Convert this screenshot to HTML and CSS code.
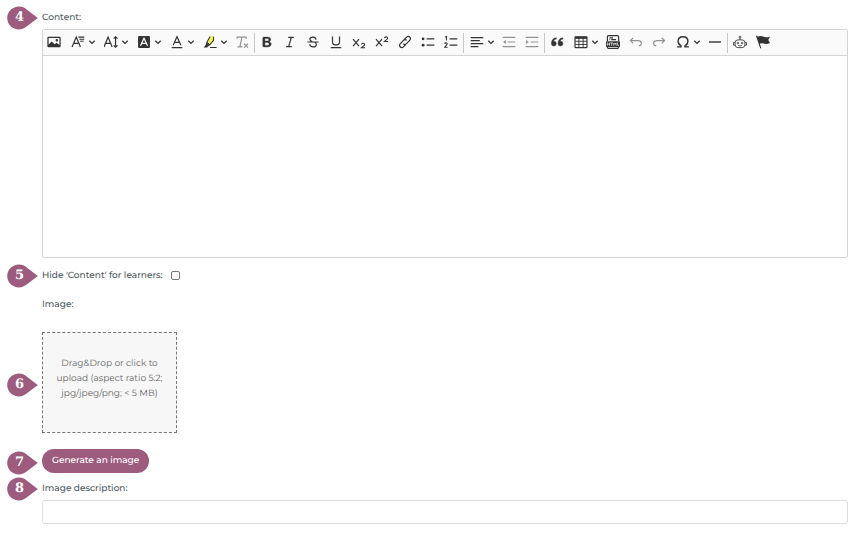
FILE: index.html
```html
<!DOCTYPE html>
<html lang="en">
<head>
<meta charset="utf-8">
<meta name="viewport" content="width=device-width, initial-scale=1">
<title>Content form</title>
<link rel="stylesheet" href="styles.css">
</head>
<body>
<svg class="defs" aria-hidden="true">
  <symbol id="pin" viewBox="0 0 31 24"><path d="M12 .5C5.500 .5.200 5.600.200 12S5.500 23.500 12 23.500c3 0 5.600-1.200 8-3.200L30.800 12 20 3.700C17.600 1.700 15 .5 12 .5z"/></symbol>
  <symbol id="chev" viewBox="0 0 8 8"><path d="M1.300 2.800 4 5.400 6.700 2.800" fill="none" stroke="currentColor" stroke-width="1.300"/></symbol>
</svg>
<form class="form">
  <div class="row label-row">
    <span class="marker"><svg><use href="#pin"/></svg><b>4</b></span>
    <label for="content">Content:</label>
  </div>
  <div class="editor">
    <div class="toolbar" role="toolbar" aria-label="Editor toolbar">
      <button type="button" aria-label="Insert image"><svg class="icon" viewBox="0 0 20 20"><path fill-rule="evenodd" d="M2 2.500h16A1.500 1.500 0 0 1 19.500 4v12a1.500 1.500 0 0 1-1.500 1.500H2A1.500 1.500 0 0 1 .5 16V4A1.500 1.500 0 0 1 2 2.500zM2.300 4.300v9.200l4.500-4.200 4.200 4 2.600-2.300 4.100 3.400V4.300zM14 5.700a1.800 1.800 0 1 1 0 3.600 1.800 1.800 0 0 1 0-3.600z"/></svg></button>
      <button type="button" class="drop" aria-label="Font family"><svg class="icon line" viewBox="0 0 20 20"><path d="M1.500 17 7.500 3 13.500 17M3.700 12h7.600"/><path d="M10.500 3H19M12 6h7M13 9h5" stroke-width="1.500"/></svg><svg class="chev"><use href="#chev"/></svg></button>
      <button type="button" class="drop" aria-label="Font size"><svg class="icon line" viewBox="0 0 20 20"><path d="M0 17 5.800 3 11.600 17M2.200 12h7.200M16.500 3v14M13.800 5.200l2.700-2.700 2.700 2.700M13.800 14.800l2.700 2.700 2.700-2.700"/></svg><svg class="chev"><use href="#chev"/></svg></button>
      <button type="button" class="drop" aria-label="Font background color"><svg class="icon" viewBox="0 0 20 20"><rect x="1.500" y="1.500" width="17" height="17" rx="1.500"/><path d="M5 15.500 10 4.500 15 15.500M6.800 12h6.400" fill="none" stroke="#fff" stroke-width="1.700"/></svg><svg class="chev"><use href="#chev"/></svg></button>
      <button type="button" class="drop" aria-label="Font color"><svg class="icon line" viewBox="0 0 20 20"><path d="M4.500 14.500 10 2.500 15.500 14.500M6.500 10.500h7M2.500 18h15"/></svg><svg class="chev"><use href="#chev"/></svg></button>
      <button type="button" class="drop" aria-label="Highlight"><svg class="icon" viewBox="0 0 20 20"><path d="m10 2 6-.5-2.500 9-4 3.500-4-3z" fill="#f7f04a"/><path d="M10.200 2 5.500 10.500l4.300 3.500 5.200-6.500V2.500" fill="none" stroke="currentColor" stroke-width="1.500"/><path d="m5 10.500 5 4-2.500 1.500L5.800 18H1l3-4zM10 17h9.500v1.700H10z"/></svg><svg class="chev"><use href="#chev"/></svg></button>
      <button type="button" class="muted" aria-label="Remove format"><svg class="icon line" viewBox="0 0 20 20"><path d="M3 5.500V3h13v2.500M10 3 7 16.500M3.500 17h7M13 12.500l5.500 5.500M18.500 12.500 13 18"/></svg></button>
      <span class="sep"></span>
      <button type="button" aria-label="Bold"><svg class="icon" viewBox="0 0 20 20"><path d="M10.187 17H5.773c-.637 0-1.092-.138-1.364-.415-.273-.277-.409-.718-.409-1.323V4.738c0-.617.14-1.062.419-1.332.279-.27.73-.406 1.354-.406h4.680c.69 0 1.288.041 1.793.124.506.083.96.242 1.360.477.341.197.644.447.906.75a3.262 3.262 0 0 1 .808 2.162c0 1.401-.722 2.426-2.167 3.075C15.050 10.175 16 11.315 16 13.010a3.756 3.756 0 0 1-2.296 3.504 6.100 6.100 0 0 1-1.517.377c-.571.073-1.238.11-2 .11zm-.217-6.217H7v4.087h3.069c1.977 0 2.965-.69 2.965-2.072 0-.707-.256-1.220-.768-1.537-.512-.319-1.277-.478-2.296-.478zM7 5.130v3.619h2.606c.729 0 1.292-.067 1.690-.2a1.600 1.600 0 0 0 .91-.765c.165-.267.247-.566.247-.897 0-.707-.26-1.176-.778-1.409-.519-.232-1.310-.348-2.375-.348H7z" stroke="currentColor" stroke-width=".6"/></svg></button>
      <button type="button" aria-label="Italic"><svg class="icon line" viewBox="0 0 20 20"><path d="M7.500 3.300h8M4.500 16.700h8M11.800 3.300 8.200 16.700"/></svg></button>
      <button type="button" aria-label="Strikethrough"><svg class="icon line" viewBox="0 0 20 20"><path d="M14.500 6.500C14 4.200 12.500 3 10 3 7.500 3 5.500 4.200 5.500 6.200c0 1.700 1.400 2.700 3.500 3.300M2 10h16M12.500 10.700c1.500.6 2.300 1.500 2.300 2.700 0 2.200-2 3.600-4.600 3.600-2.700 0-4.500-1.400-4.900-3.800"/></svg></button>
      <button type="button" aria-label="Underline"><svg class="icon line" viewBox="0 0 20 20"><path d="M5 2v7.500c0 3 2 4.700 5 4.700s5-1.700 5-4.700V2M2.500 18h15"/></svg></button>
      <button type="button" aria-label="Subscript"><svg class="icon line" viewBox="0 0 20 20"><path d="m1.500 6 8.500 10M10 6 1.500 16"/><path d="M13.500 13.500c.3-2.500 4.500-2.300 4.500 0 0 1.500-2.500 3-4.500 4.700h5.200" stroke-width="1.500"/></svg></button>
      <button type="button" aria-label="Superscript"><svg class="icon line" viewBox="0 0 20 20"><path d="m1.500 6 8.500 10M10 6 1.500 16"/><path d="M13.500 4.500c.3-2.500 4.500-2.300 4.500 0 0 1.500-2.500 3-4.500 4.700h5.200" stroke-width="1.500"/></svg></button>
      <button type="button" aria-label="Link"><svg class="icon line" viewBox="0 0 20 20"><path d="m8.700 6.800 3.600-3.700c3.200-2.700 7 .9 4.600 4.100l-4.700 5.200c-1.500 1.400-3.500 1.200-4.500-.2M11.300 13.200l-3.600 3.700c-3.200 2.700-7-.9-4.600-4.100l4.700-5.200c1.500-1.400 3.500-1.200 4.500.2"/></svg></button>
      <button type="button" aria-label="Bulleted list"><svg class="icon line" viewBox="0 0 20 20"><path d="M8 5.500h11M8 14.500h11"/><circle cx="3" cy="5.500" r="2" fill="currentColor" stroke="none"/><circle cx="3" cy="14.500" r="2" fill="currentColor" stroke="none"/></svg></button>
      <button type="button" aria-label="Numbered list"><svg class="icon line" viewBox="0 0 20 20"><path d="M8 5.500h11M8 14.500h11"/><path d="M1.500 3 3.500 2v6M1 12.500c.5-2 4-1.500 3.500.5L1.200 17.500H5" stroke-width="1.500"/></svg></button>
      <span class="sep"></span>
      <button type="button" class="drop" aria-label="Text alignment"><svg class="icon line" viewBox="0 0 20 20"><path d="M1 3.700h18M1 8h13M1 12.300h18M1 16.600h11"/></svg><svg class="chev"><use href="#chev"/></svg></button>
      <button type="button" class="muted" aria-label="Decrease indent"><svg class="icon line" viewBox="0 0 20 20"><path d="M1 3.500h18M8 10h11M1 16.500h18"/><path d="M5.500 7v6L1.500 10z" fill="currentColor" stroke="none"/></svg></button>
      <button type="button" class="muted" aria-label="Increase indent"><svg class="icon line" viewBox="0 0 20 20"><path d="M1 3.500h18M8 10h11M1 16.500h18"/><path d="M1.500 7v6l4-3z" fill="currentColor" stroke="none"/></svg></button>
      <span class="sep"></span>
      <button type="button" aria-label="Block quote"><svg class="icon" viewBox="0 0 20 20"><path d="M9 4C4.500 4.600 2 7.500 2 12v.5a3.500 3.500 0 1 0 3.500-3.700h-.3C5.700 7 7 6 9 5.700zM18.500 4c-4.500.6-7 3.500-7 8v.5A3.500 3.500 0 1 0 15 8.800h-.3c.5-1.800 1.800-2.800 3.800-3.100z" stroke="currentColor" stroke-width=".7"/></svg></button>
      <button type="button" class="drop" aria-label="Insert table"><svg class="icon line" viewBox="0 0 20 20"><rect x="1.500" y="2.500" width="17" height="15.500" rx="1"/><path d="M1.500 4h17" stroke-width="3"/><path d="M2 9h16M2 13.500h16M7 3v15M13 3v15" stroke-width="1.300"/></svg><svg class="chev"><use href="#chev"/></svg></button>
      <button type="button" aria-label="Insert HTML"><svg class="icon line" viewBox="0 0 20 20"><path d="M2 9V2.500Q2 1 3.500 1h13Q18 1 18 2.500V9M2 17v.5Q2 19 3.500 19h13q1.500 0 1.500-1.500V17M5 4h5M7.500 6.700h7M5 6.700h1"/><rect x="0" y="9" width="20" height="8" rx="1" fill="currentColor" stroke="none"/><path d="M2 10.700v4.600M5 10.700v4.600M2 13h3M6.300 11.300h3.400M8 11.300v4M11 15.300v-4l1.700 2 1.700-2v4M16.500 10.700v4h2" stroke="#fff" stroke-width="1"/></svg></button>
      <button type="button" class="muted" aria-label="Undo"><svg class="icon line" viewBox="0 0 20 20"><path d="M6 4 2 8l4 4M2.500 8H13c6 0 6 7 1 7.500"/></svg></button>
      <button type="button" class="muted" aria-label="Redo"><svg class="icon line" viewBox="0 0 20 20"><path d="m14 4 4 4-4 4M17.500 8H7C1 8 1 15 6 15.500"/></svg></button>
      <button type="button" class="drop" aria-label="Special characters"><svg class="icon line" viewBox="0 0 20 20"><path d="M1.500 17h5.700v-1.500C4.500 14 3 12 3 9c0-4 3-6.500 7-6.500S17 5 17 9c0 3-1.500 5-4.200 6.500V17h5.700" stroke-width="2"/></svg><svg class="chev"><use href="#chev"/></svg></button>
      <button type="button" aria-label="Horizontal line"><svg class="icon line" viewBox="0 0 20 20"><path d="M1.500 10h17" stroke-width="2"/></svg></button>
      <span class="sep"></span>
      <button type="button" aria-label="AI assistant"><svg class="icon line thin" viewBox="0 0 20 20"><rect x="3" y="7" width="14" height="11" rx="4"/><path d="M10 7V4M3 10.500H.7v4H3M17 10.500h2.300v4H17M7.500 15q2.500 1.200 5 0"/><circle cx="10" cy="3" r="1.300"/><circle cx="7" cy="11.500" r="1.100"/><circle cx="13" cy="11.500" r="1.100"/></svg></button>
      <button type="button" aria-label="Flag"><svg class="icon" viewBox="0 0 20 20"><path d="M0 1.500 1.500.8l1 1.700C6 .5 8.500 1.500 11 2.500s5 1 9-.5l-2.500 5 2.500 4.500c-4 2-7 1.500-9.500.7-2-.7-3.700-.7-5 .3L7.500 19H6z"/></svg></button>
    </div>
    <textarea id="content"></textarea>
  </div>
  <div class="row check-row">
    <span class="marker"><svg><use href="#pin"/></svg><b>5</b></span>
    <label for="hide">Hide 'Content' for learners:</label>
    <input type="checkbox" id="hide">
  </div>
  <div class="row image-label"><label for="image">Image:</label></div>
  <div class="row">
    <span class="marker low"><svg><use href="#pin"/></svg><b>6</b></span>
    <label class="dropzone" for="image">Drag&amp;Drop or click to upload (aspect ratio 5:2; jpg/jpeg/png; &lt; 5 MB)</label>
    <input class="file" type="file" id="image" accept=".jpg,.jpeg,.png">
  </div>
  <div class="row action-row">
    <span class="marker low"><svg><use href="#pin"/></svg><b>7</b></span>
    <button type="button" class="generate">Generate an image</button>
  </div>
  <div class="row description-row">
    <span class="marker"><svg><use href="#pin"/></svg><b>8</b></span>
    <label for="description">Image description:</label>
  </div>
  <input class="text" type="text" id="description">
</form>
</body>
</html>
```
FILE: styles.css
```css
* { box-sizing: border-box; }
body {
  margin: 0;
  background: #fff;
  color: #4f5a61;
  font: 500 9px/16px Montserrat, Inter, sans-serif;
  text-rendering: geometricPrecision;
}
button, input, textarea { font: inherit; text-rendering: inherit; }
.defs { position: absolute; width: 0; height: 0; }
.form {
  display: flex;
  flex-direction: column;
  padding: 10px 10px 14px 42px;
}
.row { position: relative; display: flex; align-items: center; }
.label-row { margin-bottom: 3px; }

.marker {
  position: absolute;
  left: -35px;
  top: 50%;
  width: 31px;
  height: 24px;
  margin-top: -12px;
  color: #fff;
}
.marker.low { margin-top: -10px; }
.marker svg { display: block; width: 31px; height: 24px; fill: #9d5b7e; }
.marker b {
  position: absolute;
  inset: 0 6px 0 0;
  text-align: center;
  font: bold 13px/24px "DejaVu Serif", serif;
}

.editor {
  display: flex;
  flex-direction: column;
  border: 1px solid #d4d4d4;
  border-radius: 2px;
}
.toolbar {
  display: flex;
  align-items: flex-start;
  gap: 1px;
  height: 26px;
  background: #fafafa;
  border-bottom: 1px solid #d4d4d4;
}
.toolbar button {
  display: flex;
  flex: none;
  align-items: center;
  justify-content: center;
  width: 22px;
  height: 24px;
  padding: 0;
  border: 0;
  background: none;
  color: #333;
}
.toolbar .drop { width: 32px; gap: 3px; padding-left: 3px; }
.toolbar .muted { color: #929292; }
.icon { flex: none; width: 14px; height: 14px; fill: currentColor; }
.line { fill: none; stroke: currentColor; stroke-width: 1.7; }
.thin { stroke-width: 1.2; }
.chev { flex: none; width: 8px; height: 8px; }
.sep { align-self: center; width: 1px; height: 20px; background: #c8c8c8; }
textarea {
  display: block;
  width: 100%;
  height: 201px;
  padding: 6px;
  border: 0;
  background: #fff;
  resize: none;
}

.check-row { margin-top: 10px; gap: 8px; }
.check-row input {
  appearance: none;
  width: 9px;
  height: 9px;
  margin: 0 0 2px;
  border: 1px solid #777;
  border-radius: 2px;
  background: #fff;
}
.check-row input:checked { background: #9d5b7e; }
.image-label { margin: 13px 0 19px; }
.dropzone {
  display: flex;
  align-items: center;
  width: 135px;
  height: 101px;
  padding: 0 10px 8px;
  border: 1px dashed #777;
  background: #f7f7f7;
  color: #666;
  font-weight: 400;
  line-height: 15px;
  text-align: center;
}
.file { position: absolute; width: 1px; height: 1px; opacity: 0; }
.action-row { margin-top: 16px; }
.generate {
  height: 24px;
  padding: 0 10px;
  border: 0;
  border-radius: 12px;
  background: #9d5b7e;
  color: #fff;
}
.description-row { margin: 8px 0 3px; }
.text {
  width: 100%;
  height: 24px;
  padding: 0 8px;
  border: 1px solid #ddd;
  border-radius: 3px;
  background: #fff;
}
```
